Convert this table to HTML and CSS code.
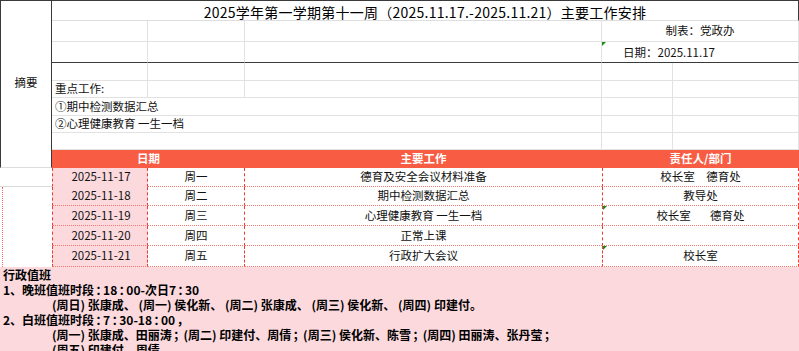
FILE: index.html
```html
<!DOCTYPE html>
<html lang="zh-CN">
<head>
<meta charset="utf-8">
<title>主要工作安排</title>
<link rel="stylesheet" href="styles.css">
</head>
<body>
<div class="sheet">
  <div class="cell summary">摘要</div>
  <div class="cell title span-bf">2025学年第一学期第十一周（2025.11.17.-2025.11.21）主要工作安排</div>

  <div class="cell g"></div>
  <div class="cell g"></div>
  <div class="cell g"></div>
  <div class="cell g span-ef center">制表：党政办</div>

  <div class="cell g dark"></div>
  <div class="cell g dark"></div>
  <div class="cell g dark"></div>
  <div class="cell g dark span-ef date-cell marked">日期：2025.11.17</div>

  <div class="cell g"></div>
  <div class="cell g"></div>
  <div class="cell g"></div>
  <div class="cell g"></div>
  <div class="cell g"></div>

  <div class="cell g left">重点工作:</div>
  <div class="cell g"></div>
  <div class="cell g"></div>
  <div class="cell g"></div>
  <div class="cell g"></div>

  <div class="cell g span-bd left">①期中检测数据汇总</div>
  <div class="cell g"></div>
  <div class="cell g"></div>

  <div class="cell g span-bd left">②心理健康教育 一生一档</div>
  <div class="cell g"></div>
  <div class="cell g"></div>

  <div class="cell g span-bd"></div>
  <div class="cell g"></div>
  <div class="cell g"></div>

  <div class="cell head span-bc">日期</div>
  <div class="cell head">主要工作</div>
  <div class="cell head span-ef">责任人/部门</div>

  <div class="cell a-first"></div>
  <div class="cell d-date no-bottom">2025-11-17</div>
  <div class="cell d-day">周一</div>
  <div class="cell d-work">德育及安全会议材料准备</div>
  <div class="cell d-dept span-ef">校长室　德育处</div>

  <div class="cell a-rest"></div>
  <div class="cell d-date">2025-11-18</div>
  <div class="cell d-day">周二</div>
  <div class="cell d-work">期中检测数据汇总</div>
  <div class="cell d-dept span-ef">教导处</div>

  <div class="cell d-date">2025-11-19</div>
  <div class="cell d-day">周三</div>
  <div class="cell d-work">心理健康教育 一生一档</div>
  <div class="cell d-dept span-ef marked">校长室　   德育处</div>

  <div class="cell d-date">2025-11-20</div>
  <div class="cell d-day">周四</div>
  <div class="cell d-work">正常上课</div>
  <div class="cell d-dept span-ef"></div>

  <div class="cell d-date">2025-11-21</div>
  <div class="cell d-day">周五</div>
  <div class="cell d-work">行政扩大会议</div>
  <div class="cell d-dept span-ef marked">校长室</div>
</div>

<div class="duty">
  <p class="line">行政值班</p>
  <p class="line">1、晚班值班时段<span class="np">：</span>18<span class="np">：</span>00-次日7<span class="np">：</span>30</p>
  <p class="line indent">(周日) 张康成、 (周一) 侯化新、 (周二) 张康成、 (周三) 侯化新、 (周四) 印建付。</p>
  <p class="line">2、白班值班时段<span class="np">：</span>7<span class="np">：</span>30-18<span class="np">：</span>00<span class="np">，</span></p>
  <p class="line indent">(周一) 张康成、田丽涛<span class="np">；</span> (周二) 印建付、周倩<span class="np">；</span> (周三) 侯化新、陈雪<span class="np">；</span> (周四) 田丽涛、张丹莹<span class="np">；</span></p>
  <p class="line indent">(周五) 印建付、周倩、</p>
</div>
</body>
</html>
```

FILE: styles.css
```css
html, body {
  margin: 0;
  padding: 0;
  background: #ffffff;
}

body {
  font-family: "Noto Sans CJK SC", "Microsoft YaHei", sans-serif;
  color: #111111;
  width: 799px;
  height: 351px;
  overflow: hidden;
}

.sheet {
  display: grid;
  grid-template-columns: 52px 96px 97px 357px 71px 126px;
  grid-template-rows: 21px 21px 21px 18px 17px 18px 17px 17px 18px 19px 19px 20px 20px 21px;
}

.cell {
  box-sizing: border-box;
  display: flex;
  align-items: center;
  justify-content: center;
  font-size: 11.5px;
  line-height: 1;
  white-space: pre;
  position: relative;
}

.span-bf { grid-column: 2 / 7; }
.span-bd { grid-column: 2 / 5; }
.span-bc { grid-column: 2 / 4; }
.span-ef { grid-column: 5 / 7; }

.summary {
  grid-column: 1;
  grid-row: 1 / 10;
  border-top: 1px solid #3a3a3a;
  border-left: 1px solid #3a3a3a;
  border-right: 1px solid #3a3a3a;
  border-bottom: 1px solid #dcdcdc;
  padding-bottom: 2px;
}

.title {
  border-top: 1px solid #3a3a3a;
  border-right: 1px solid #3a3a3a;
  border-bottom: 1px solid #dedede;
  font-size: 14px;
  letter-spacing: 0.25px;
  padding-top: 2px;
  color: #000;
}

.g {
  border-right: 1px solid #e2e2e2;
  border-bottom: 1px solid #e2e2e2;
}

.dark {
  border-bottom: 1px solid #3a3a3a;
}

.center { justify-content: center; }

.left {
  justify-content: flex-start;
  padding-left: 3px;
}

.date-cell {
  justify-content: flex-start;
  padding-left: 21px;
  padding-top: 2px;
}

.marked::before {
  content: "";
  position: absolute;
  left: 0;
  top: 0;
  border-top: 4px solid #1a8a1a;
  border-right: 4px solid transparent;
}

.head {
  background: #f85c43;
  color: #ffffff;
  font-weight: 700;
}

.a-first {
  grid-column: 1;
  border-bottom: 1px solid #dcdcdc;
}

.a-rest {
  grid-column: 1;
  grid-row: span 4;
  margin-left: 2px;
  border-left: 1px dotted #f26a5e;
}

.d-date {
  background: #fbd9dd;
  border-left: 1px dashed #ee3b30;
  border-right: 1px dashed #ee3b30;
  border-bottom: 1px dotted #f47a72;
  padding-left: 2px;
}

.no-bottom {
  border-bottom-color: transparent;
}

.d-day {
  border-right: 1px dashed #ee3b30;
  border-bottom: 1px dotted #f47a72;
}

.d-work {
  border-bottom: 1px dotted #f47a72;
}

.d-dept {
  border-left: 1px dashed #ee3b30;
  border-right: 1px dashed #ee3b30;
  border-bottom: 1px dotted #f47a72;
}

.duty {
  background: #fbd9dd;
  height: 84px;
  overflow: hidden;
  box-sizing: border-box;
}

.line {
  margin: 0;
  padding-left: 3px;
  font-size: 12px;
  line-height: 15px;
  font-weight: 700;
  color: #000;
  white-space: pre;
}

.indent {
  padding-left: 52px;
}

.np {
  font-feature-settings: "halt" 1;
  padding: 0 1.5px;
}
```
